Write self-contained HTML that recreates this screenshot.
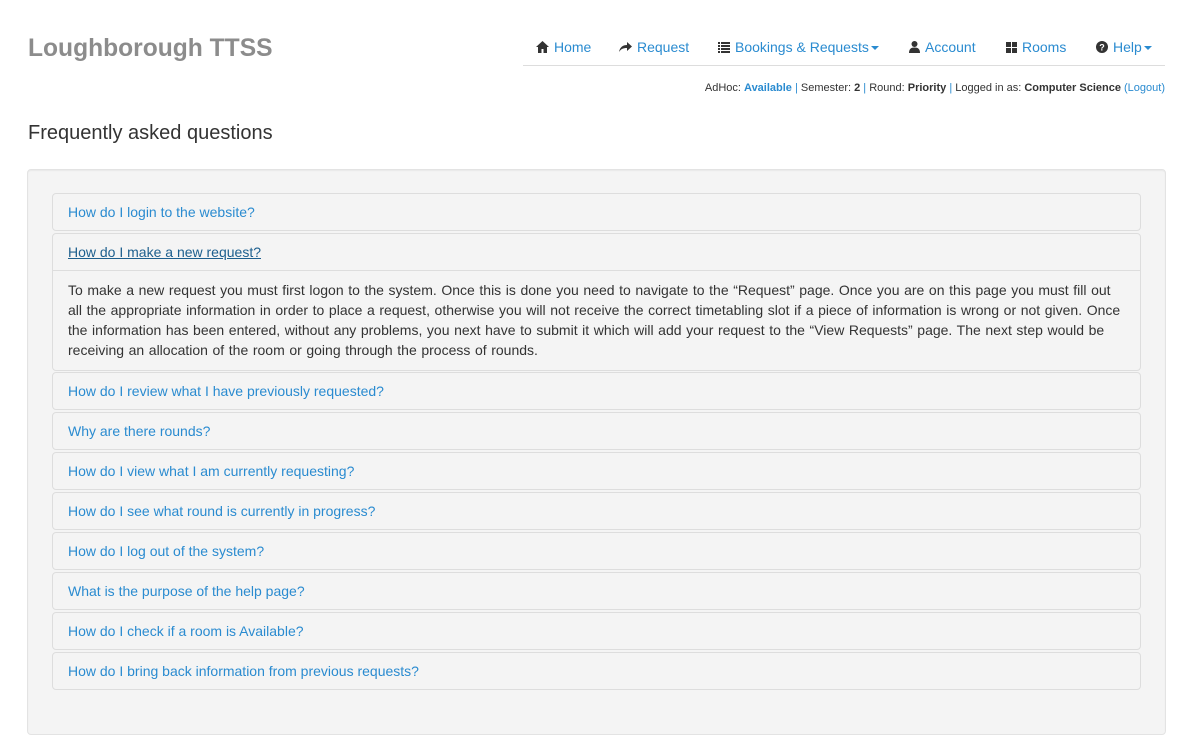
<!DOCTYPE html>
<html><head><style>
body{margin:0;font-family:"Liberation Sans",sans-serif;font-size:14px;color:#333;background:#fff;width:1199px;height:746px;overflow:hidden;position:relative}
a{color:#2a8bd0;text-decoration:none}
.brand{position:absolute;left:28px;top:35px;font-size:24.6px;font-weight:bold;color:#8c8c8c}
.nav{position:absolute;left:523px;top:30px;width:642px;height:35px;border-bottom:1px solid #ddd}
.nav span{position:absolute;top:9px;color:#2a8bd0;font-size:14px;white-space:nowrap}
.nav svg{vertical-align:-1px;margin-right:5px}
.caret{display:inline-block;width:0;height:0;border-left:4px solid transparent;border-right:4px solid transparent;border-top:4px solid #2a8bd0;vertical-align:middle;margin-left:2px}
.status{position:absolute;right:34px;top:82px;font-size:11px;color:#333}
.status b{color:#333}
h3{position:absolute;left:28px;top:122px;margin:0;font-size:20px;font-weight:normal}
.well{position:absolute;left:27px;top:169px;width:1137px;height:564px;background:#f4f4f4;border:1px solid #e3e3e3;border-radius:4px;box-shadow:inset 0 1px 1px rgba(0,0,0,.05)}
.p{position:absolute;left:52px;width:1087px;background:#f4f4f4;border:1px solid #ddd;border-radius:4px}
.p .h{height:36px;line-height:36px;padding-left:15px;color:#2a8bd0}
.p .b{border-top:1px solid #ddd;padding:9px 15px 10px;line-height:20px;word-spacing:0.7px}
</style></head><body>
<div class="brand">Loughborough TTSS</div>
<div class="nav">
<span style="left:13px"><svg width="13" height="12" viewBox="0 0 13 12"><path d="M6.5 0L0 6h2v6h3.5V8h2v4H11V6h2z" fill="#333"/></svg>Home</span>
<span style="left:96px"><svg width="13" height="12" viewBox="0 0 13 12"><path d="M8 1l5 4.5L8 10V7C4 7 2 8 0 11 1 6 4 4 8 4z" fill="#333"/></svg>Request</span>
<span style="left:195px"><svg width="12" height="11" viewBox="0 0 12 11"><path d="M0 0h2v2H0zM3 0h9v2H3zM0 3h2v2H0zM3 3h9v2H3zM0 6h2v2H0zM3 6h9v2H3zM0 9h2v2H0zM3 9h9v2H3z" fill="#333"/></svg>Bookings &amp; Requests<i class="caret"></i></span>
<span style="left:386px"><svg width="11" height="12" viewBox="0 0 11 12"><circle cx="5.5" cy="3" r="3" fill="#333"/><path d="M0 12c0-4 2-5.5 5.5-5.5S11 8 11 12z" fill="#333"/></svg>Account</span>
<span style="left:483px"><svg width="11" height="11" viewBox="0 0 11 11"><path d="M0 0h5v5H0zM6 0h5v5H6zM0 6h5v5H0zM6 6h5v5H6z" fill="#333"/></svg>Rooms</span>
<span style="left:573px"><svg width="12" height="12" viewBox="0 0 12 12"><circle cx="6" cy="6" r="6" fill="#333"/><text x="6" y="9.5" font-size="9" font-weight="bold" fill="#fff" text-anchor="middle" font-family="Liberation Sans">?</text></svg>Help<i class="caret"></i></span>
</div>
<div class="status">AdHoc: <b style="color:#2a8bd0">Available</b> <span style="color:#2a8bd0">|</span> Semester: <b>2</b> <span style="color:#2a8bd0">|</span> Round: <b>Priority</b> <span style="color:#2a8bd0">|</span> Logged in as: <b>Computer Science</b> <a>(Logout)</a></div>
<h3>Frequently asked questions</h3>
<div class="well"></div>
<div class="p" style="top:193px"><div class="h">How do I login to the website?</div></div>
<div class="p" style="top:233px"><div class="h" style="color:#1d5f8e;text-decoration:underline">How do I make a new request?</div><div class="b">To make a new request you must first logon to the system. Once this is done you need to navigate to the “Request” page. Once you are on this page you must fill out all the appropriate information in order to place a request, otherwise you will not receive the correct timetabling slot if a piece of information is wrong or not given. Once the information has been entered, without any problems, you next have to submit it which will add your request to the “View Requests” page. The next step would be receiving an allocation of the room or going through the process of rounds.</div></div>
<div class="p" style="top:372px"><div class="h">How do I review what I have previously requested?</div></div>
<div class="p" style="top:412px"><div class="h">Why are there rounds?</div></div>
<div class="p" style="top:452px"><div class="h">How do I view what I am currently requesting?</div></div>
<div class="p" style="top:492px"><div class="h">How do I see what round is currently in progress?</div></div>
<div class="p" style="top:532px"><div class="h">How do I log out of the system?</div></div>
<div class="p" style="top:572px"><div class="h">What is the purpose of the help page?</div></div>
<div class="p" style="top:612px"><div class="h">How do I check if a room is Available?</div></div>
<div class="p" style="top:652px"><div class="h">How do I bring back information from previous requests?</div></div>
</body></html>
